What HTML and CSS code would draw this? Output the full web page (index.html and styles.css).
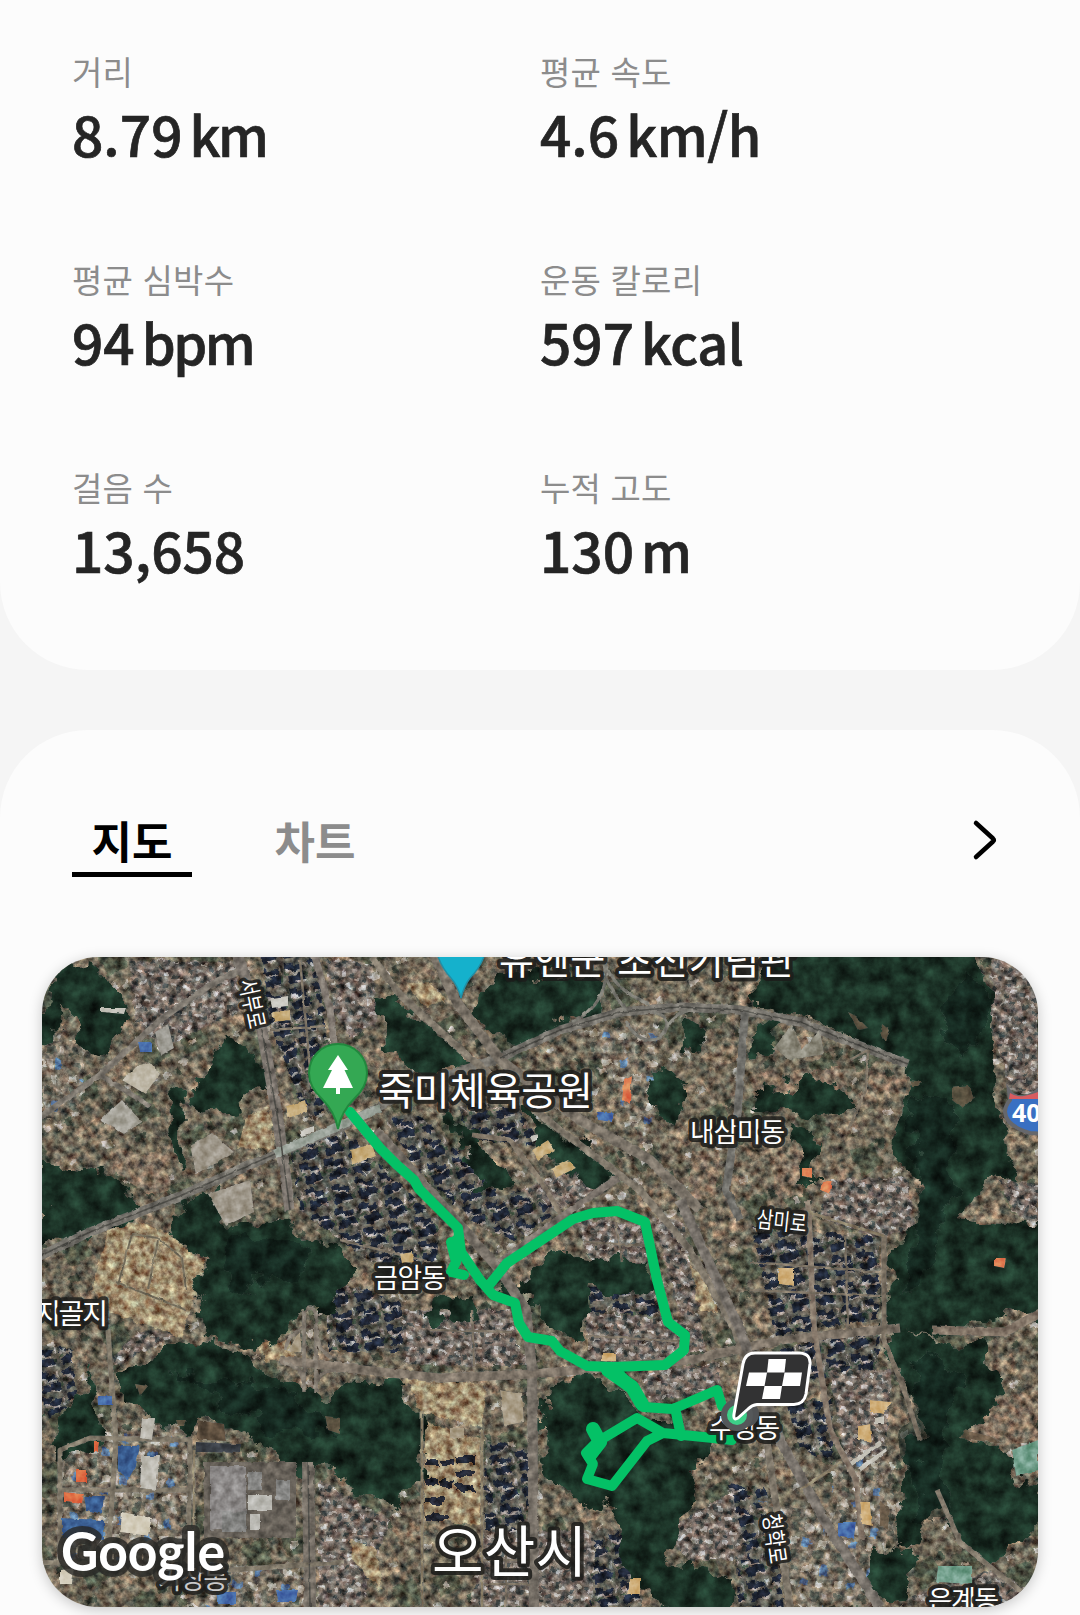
FILE: index.html
```html
<!DOCTYPE html>
<html lang="ko">

<head>
  <meta charset="UTF-8" />
  <meta name="viewport" content="width=device-width, initial-scale=1.0" />
  <title>운동 기록</title>
  <link rel="stylesheet" href="styles.css">
</head>

<body>
  <section class="card summary">
    <div class="stat">
      <div class="label">거리</div>
      <div class="value">8.79<span class="unit">km</span></div>
    </div>
    <div class="stat">
      <div class="label">평균 속도</div>
      <div class="value">4.6<span class="unit wide">km/h</span></div>
    </div>
    <div class="stat">
      <div class="label">평균 심박수</div>
      <div class="value">94<span class="unit">bpm</span></div>
    </div>
    <div class="stat">
      <div class="label">운동 칼로리</div>
      <div class="value">597<span class="unit wide">kcal</span></div>
    </div>
    <div class="stat">
      <div class="label">걸음 수</div>
      <div class="value">13,658</div>
    </div>
    <div class="stat">
      <div class="label">누적 고도</div>
      <div class="value">130<span class="unit">m</span></div>
    </div>
  </section>

  <section class="card detail">
    <div class="tabs">
      <div class="tab active">지도</div>
      <div class="tab">차트</div>
      <svg class="more" width="28" height="44" viewBox="0 0 28 44">
        <path d="M5 5 L22 20.5 Q23.5 22 22 23.5 L5 39" />
      </svg>
    </div>

    <div class="map">
      <svg width="996" height="650" viewBox="42 957 996 650">
        <defs>
          <!-- built-up ground: slightly warped, small patches of light and dark -->
          <filter id="urban" x="0" y="0" width="100%" height="100%" color-interpolation-filters="sRGB">
            <feTurbulence type="fractalNoise" baseFrequency="0.11" numOctaves="3" seed="7" result="w" />
            <feDisplacementMap in="SourceGraphic" in2="w" scale="8" xChannelSelector="R" yChannelSelector="G" result="d" />
            <feTurbulence type="fractalNoise" baseFrequency="0.13" numOctaves="4" seed="21" />
            <feColorMatrix type="matrix" values="1.05 .15 0 0 -.08  1.05 0 .1 0 -.06  1.05 0 .2 0 -.1  0 0 0 0 1" result="g" />
            <feBlend in="g" in2="d" mode="overlay" />
          </filter>
          <!-- tree cover: ragged edges, soft grain -->
          <filter id="trees" x="-5%" y="-5%" width="110%" height="110%" color-interpolation-filters="sRGB">
            <feTurbulence type="fractalNoise" baseFrequency="0.035" numOctaves="5" seed="3" result="n" />
            <feDisplacementMap in="SourceGraphic" in2="n" scale="38" xChannelSelector="R" yChannelSelector="G" result="d" />
            <feTurbulence type="fractalNoise" baseFrequency="0.06" numOctaves="5" seed="12" />
            <feColorMatrix type="matrix" values=".8 0 0 0 .04  .8 0 0 0 .04  .8 0 0 0 .04  0 0 0 0 1" result="g" />
            <feBlend in="g" in2="d" mode="overlay" />
            <feComposite in2="d" operator="in" />
          </filter>
          <filter id="rough" x="-5%" y="-5%" width="110%" height="110%" color-interpolation-filters="sRGB">
            <feTurbulence type="fractalNoise" baseFrequency="0.12" numOctaves="3" seed="9" result="n" />
            <feDisplacementMap in="SourceGraphic" in2="n" scale="3" xChannelSelector="R" yChannelSelector="G" result="d" />
            <feColorMatrix in="n" type="matrix" values=".45 0 0 0 .27  .45 0 0 0 .27  .45 0 0 0 .27  0 0 0 0 1" result="g" />
            <feBlend in="g" in2="d" mode="overlay" />
            <feComposite in2="d" operator="in" />
          </filter>

          <pattern id="apt" width="25" height="25" patternUnits="userSpaceOnUse" patternTransform="rotate(-12)">
            <rect width="25" height="25" fill="#5a594f" />
            <path d="M1 2h9v4h9v6h-10v-3h-8z M3 15h8v-2h10v8h-9v2h-9z" fill="#1d2431" />
            <path d="M2 8h7v3h9v2h-11v-2h-5z M12 21h9v2h-9z M21 3h2v8h-2z" fill="#8f8981" />
            <path d="M21 14h3v5h-3z M1 12h4v2h-4z" fill="#364436" />
          </pattern>
          <pattern id="houses" width="29" height="25" patternUnits="userSpaceOnUse" patternTransform="rotate(8)">
            <rect width="29" height="25" fill="#6a6259" />
            <path d="M1 1h5v4h-5z M15 1h6v3h-6z M9 14h5v4h-5z M22 18h5v3h-5z" fill="#aba69f" />
            <path d="M8 2h5v4h-5z M23 2h4v5h-4z M2 9h5v3h-5z M17 15h4v5h-4z M2 20h5v3h-5z" fill="#3b403e" />
            <path d="M10 8h6v3h-6z M20 10h6v4h-6z M2 15h5v3h-5z M10 20h4v3h-4z" fill="#857d74" />
          </pattern>
          <pattern id="works" width="47" height="41" patternUnits="userSpaceOnUse" patternTransform="rotate(4)">
            <rect width="47" height="41" fill="#716a5b" />
            <path d="M2 2h9v7h-9z M31 4h8v6h-8z M16 29h10v7h-10z" fill="#aaa597" />
            <path d="M15 3h8v6h-8z M35 28h7v9h-7z" fill="#526f92" />
            <path d="M3 14h7v9h-7z M26 14h9v8h-9z M5 30h7v5h-7z" fill="#4d5147" />
            <path d="M15 14h7v8h-7z M38 15h6v8h-6z M28 28h5v9h-5z" fill="#918a7c" />
          </pattern>
          <pattern id="soil" width="120" height="100" patternUnits="userSpaceOnUse" patternTransform="rotate(-25)">
            <rect width="120" height="100" fill="#676151" />
            <path d="M5 8h30v20h-30z M70 54h34v18h-34z M40 76h22v16h-22z" fill="#7d705c" />
            <path d="M44 4h24v26h-24z M8 48h26v30h-26z M84 12h24v22h-24z" fill="#4c5141" />
            <path d="M42 40h8v6h-8z M54 42h7v7h-7z M74 38h8v5h-8z M90 80h9v6h-9z M14 36h7v5h-7z M52 82h6v5h-6z M90 22h7v5h-7z" fill="#a19b8e" />
            <path d="M72 4h6v9h-6z M2 86h10v7h-10z M108 44h7v7h-7z M66 42h5v8h-5z M20 60h8v8h-8z" fill="#3c4337" />
          </pattern>
        </defs>

        <g filter="url(#urban)">
          <rect x="30" y="945" width="1020" height="674" fill="url(#soil)" />

          <!-- housing blocks -->
          <g fill="url(#apt)">
            <path d="M262 950 L318 950 L326 1036 L350 1100 L306 1118 L286 1062 L268 1020Z" />
            <path d="M290 1145 L342 1130 L440 1222 L436 1270 L372 1262 L352 1250 L300 1210Z" />
            <path d="M385 1120 L414 1112 L480 1170 L500 1196 L535 1185 L562 1210 L512 1240 L478 1226 L420 1172Z" />
            <path d="M455 1100 L520 1110 L540 1146 L470 1140Z" />
            <path d="M322 1278 L400 1300 L404 1352 L330 1352Z" />
            <path d="M752 1226 L880 1238 L878 1318 L776 1336Z" />
            <path d="M780 1348 L880 1330 L878 1380 L800 1378Z" />
            <path d="M785 1400 L832 1400 L832 1462 L800 1448Z" />
            <path d="M485 1440 L530 1450 L530 1530 L486 1530Z" />
            <path d="M42 1345 L72 1350 L76 1400 L42 1424Z" />
            <path d="M588 1285 L662 1290 L660 1316 L590 1312Z" />
            <path d="M728 1484 L768 1490 L784 1607 L740 1607Z" />
            <path d="M596 1530 L640 1530 L640 1607 L580 1607Z" />
          </g>
          <g fill="url(#houses)">
            <path d="M325 957 L372 965 L378 1020 L350 1040 L334 1010Z" />
            <path d="M130 960 L235 962 L240 1010 L160 1050 L135 1020Z" />
            <path d="M574 1216 L640 1224 L655 1262 L594 1268Z" />
            <path d="M652 1216 L682 1222 L706 1352 L690 1352Z" />
            <path d="M586 1312 L690 1320 L690 1362 L588 1362Z" />
            <path d="M402 1310 L512 1310 L520 1366 L404 1364Z" />
            <path d="M640 1372 L720 1362 L720 1390 L650 1402Z" />
            <path d="M660 1532 L732 1492 L748 1560 L690 1560Z" />
            <path d="M828 1180 L908 1176 L914 1230 L872 1238 L820 1216Z" />
            <path d="M830 1372 L892 1368 L884 1470 L845 1460Z" />
            <path d="M992 960 L1038 960 L1038 1100 L1010 1090 L990 1020Z" />
            <path d="M488 1340 L540 1360 L530 1366 L490 1366Z" />
            <path d="M520 1190 L590 1160 L610 1184 L560 1210Z" />
            <path d="M484 1530 L596 1530 L590 1607 L470 1607Z" />
            <path d="M110 1360 L140 1330 L180 1334 L140 1352 L118 1366Z" />
            <path d="M320 1480 L390 1520 L360 1607 L318 1607Z" />
            <path d="M1000 1180 L1038 1184 L1038 1226 L1012 1212Z" />
            <path d="M900 1600 L990 1570 L1030 1590 L1000 1607Z" />
          </g>
          <g fill="url(#works)">
            <path d="M60 1440 L190 1420 L192 1560 L58 1560Z" />
            <path d="M42 1020 L85 1050 L80 1110 L42 1120Z" />
            <path d="M578 1030 L660 1024 L650 1160 L690 1190 L660 1180 L600 1060Z" />
            <path d="M180 1560 L300 1570 L310 1607 L190 1607Z" />
            <path d="M760 1500 L890 1520 L880 1607 L800 1607Z" />
            <path d="M830 1470 L892 1450 L896 1540 L838 1530Z" />
          </g>

          <!-- bare soil and fields -->
          <g fill="#9a8868">
            <path d="M108 1228 L140 1222 L168 1234 L205 1262 L182 1338 L110 1312 L92 1290Z" />
            <path d="M406 1378 L486 1384 L482 1428 L420 1412Z" />
            <path d="M424 1422 L482 1440 L480 1525 L424 1520Z" />
            <path d="M245 1120 L268 1106 L276 1150 L238 1148Z" />
            <path d="M405 984 L430 982 L446 1000 L426 1008Z" />
            <path d="M690 1264 L708 1280 L718 1312 L700 1312Z" />
            <path d="M258 1344 L290 1340 L296 1360 L266 1362Z" />
            <path d="M350 1540 L376 1548 L382 1590 L352 1560Z" />
          </g>
          <g fill="#786a58">
            <path d="M750 1072 L806 1074 L840 1066 L850 1098 L812 1088 L754 1098Z" />
            <path d="M870 1070 L908 1080 L906 1096 L868 1086Z" />
            <path d="M770 1156 L804 1150 L802 1196 L776 1198Z" />
            <path d="M692 1150 L720 1150 L716 1198 L688 1200Z" />
            <path d="M110 1148 L165 1160 L172 1190 L150 1196 L112 1170Z" />
            <path d="M985 1400 L1038 1390 L1038 1440 L1000 1446 L960 1438Z" />
          </g>
          <!-- half-built towers south of the main road -->
          <path d="M425 1458h14v8h-14z M442 1460h12v6h-12z M456 1456h20v7h-20z M425 1478h14v8h-14z M440 1480h14v6h-14z M456 1471h18v6h-18z M456 1484h18v7h-18z M425 1497h20v7h-20z M425 1514h22v7h-22z" fill="#20242e" />
        </g>

        <!-- woods -->
        <g fill="#1f382b" filter="url(#trees)">
          <path d="M42 1010 L62 970 L90 962 L116 985 L136 1015 L108 1050 L85 1045 L60 1000 L58 1040 L42 1045Z" />
          <path d="M205 1075 L222 1040 L252 1052 L262 1082 L235 1115 L200 1110 L190 1095Z" />
          <path d="M42 1160 L90 1170 L140 1190 L138 1222 L90 1232 L42 1246Z" />
          <path d="M165 1208 L200 1200 L225 1230 L290 1224 L345 1248 L345 1285 L330 1310 L310 1310 L290 1322 L260 1348 L205 1340 L192 1290 L208 1258 L175 1240Z" />
          <path d="M120 1372 L160 1345 L200 1345 L240 1352 L262 1370 L298 1380 L324 1402 L350 1382 L390 1384 L426 1420 L424 1480 L396 1512 L330 1472 L290 1470 L250 1440 L200 1415 L180 1428 L120 1412Z" />
          <path d="M42 1450 L74 1412 L92 1362 L104 1440 L60 1460Z" />
          <path d="M380 995 L400 1000 L476 1062 L430 1074 L384 1050Z" />
          <path d="M466 1008 L500 972 L580 972 L602 990 L598 1015 L560 1030 L510 1055Z" />
          <path d="M755 940 L985 940 L990 1000 L985 1060 L1000 1110 L1012 1175 L985 1185 L964 1216 L1060 1226 L1060 1310 L960 1322 L930 1335 L885 1325 L888 1240 L920 1220 L922 1186 L892 1150 L905 1100 L910 1066 L870 1046 L820 1022 L757 1008Z" />
          <path d="M886 1320 L946 1345 L985 1342 L1004 1392 L965 1432 L1010 1452 L1022 1482 L1060 1500 L1030 1532 L990 1562 L960 1545 L940 1500 L926 1546 L900 1550 L895 1480 L918 1440 L914 1400 L890 1360Z" />
          <path d="M505 1292 L558 1250 L610 1262 L645 1264 L660 1292 L590 1290 L586 1340 L560 1335 L530 1305Z" />
          <path d="M542 1396 L570 1378 L612 1382 L640 1410 L704 1440 L692 1500 L660 1520 L600 1506 L560 1490 L540 1450Z" />
          <path d="M604 1512 L690 1500 L664 1560 L730 1580 L724 1625 L650 1597 L620 1560Z" />
          <path d="M752 1086 L842 1082 L852 1112 L800 1116 L750 1105Z" />
          <path d="M425 1100 L470 1130 L500 1160 L508 1195 L478 1192 L470 1152Z" />
          <path d="M866 1545 L912 1556 L906 1598 L872 1600Z" />
          <path d="M516 1105 L600 1160 L620 1180 L590 1190 L540 1150Z" />
          <path d="M796 1130 L820 1136 L818 1176 L800 1176Z" />
          <path d="M754 1020 L776 1018 L772 1052 L752 1056Z" />
          <path d="M424 1312 L470 1290 L478 1310 L440 1326Z" />
          <path d="M650 1070 L686 1080 L680 1116 L652 1106Z" />
          <path d="M684 1010 L704 1018 L700 1058 L680 1052Z" />
          <path d="M170 1090 L186 1100 L182 1170 L172 1150Z" />
          <path d="M182 1196 L216 1188 L224 1226 L200 1240Z" />
        </g>
        <g fill="#12231e" opacity=".5" filter="url(#trees)">
          <path d="M910 1090 L960 1110 L950 1190 L925 1280 L900 1300 L920 1200Z" />
          <path d="M920 1350 L960 1380 L940 1440 L950 1520 L920 1520 L905 1440Z" />
          <path d="M170 1370 L290 1390 L340 1430 L270 1430Z" />
          <path d="M960 970 L990 1000 L960 1060 L940 1020Z" />
          <path d="M220 1240 L300 1240 L310 1270 L230 1290Z" />
        </g>
        <!-- clearings -->
        <g fill="#6d5c49" opacity=".8" filter="url(#rough)">
          <path d="M952 1088 L968 1086 L974 1098 L962 1108 L952 1100Z M848 1012 L856 1016 L868 1028 L858 1030Z M882 1024 L890 1030 L886 1042 L880 1036Z M910 1080 L922 1082 L918 1086 L912 1086Z M960 1438 L1004 1444 L990 1436 L964 1430Z M325 1416 L340 1418 L340 1434 L328 1430Z M176 1420 L186 1420 L184 1426 L178 1426Z M136 1384 L148 1386 L140 1396Z M880 1500 L890 1510 L888 1530 L880 1526Z" />
        </g>

        <!-- roads -->
        <g class="roads" filter="url(#rough)">
          <path d="M36 1258 L90 1232 L180 1196 L275 1154 L340 1128 L420 1084 L500 1058 L560 1030 L620 1012 L680 1007 L740 1010 L800 1022 L850 1042 L908 1064" stroke="#77746d" stroke-width="9" />
          <path d="M36 1120 L100 1075 L160 1020 L210 985 L240 970" stroke="#7f7970" stroke-width="6" />
          <path d="M100 1075 L150 1106" stroke="#7f7970" stroke-width="5" />
          <path d="M236 950 L262 1030 L278 1120 L290 1210" stroke="#7b746d" stroke-width="11" />
          <path d="M313 950 L330 1010 L336 1060" stroke="#857d75" stroke-width="7" />
          <path d="M372 957 L400 995 L470 1058 L560 1130 L640 1190 L690 1250 L735 1330 L764 1420 L790 1607" stroke="#80786b" stroke-width="7" />
          <path d="M432 950 L455 1000 L500 1060 L580 1120 L650 1160 L700 1210" stroke="#7c7469" stroke-width="10" />
          <path d="M376 1130 L420 1180 L500 1270 L526 1310 L532 1370 L534 1607" stroke="#787168" stroke-width="10" />
          <path d="M472 1135 L510 1140 L540 1180 L562 1216 L614 1180" stroke="#84796a" stroke-width="5" />
          <path d="M500 1262 L560 1218 L600 1190 L618 1178" stroke="#7b736b" stroke-width="7" />
          <path d="M280 1360 L380 1372 L440 1378 L534 1374 L690 1360 L780 1340 L900 1328" stroke="#7e7468" stroke-width="9" />
          <path d="M932 1330 L1005 1332 L1042 1312" stroke="#86786a" stroke-width="9" />
          <path d="M304 1310 L304 1392 M316 1312 L316 1392 M304 1312 Q310 1304 316 1312 M286 1350 Q286 1336 303 1328 M317 1330 Q318 1352 332 1358 M284 1362 Q304 1368 304 1386 M316 1382 Q320 1370 336 1370" stroke="#837b70" stroke-width="3.5" />
          <path d="M308 1462 L310 1607" stroke="#777067" stroke-width="12" />
          <path d="M745 1010 L738 1110 L726 1190 L740 1220" stroke="#6f6e69" stroke-width="8" />
          <path d="M808 1200 L814 1330 L830 1430 L856 1480 L862 1540" stroke="#897b6d" stroke-width="6" />
          <path d="M884 1236 L884 1340 L902 1384 L920 1440" stroke="#7a7062" stroke-width="5" />
          <path d="M680 1200 L740 1330 L780 1440 L830 1530 L880 1607" stroke="#77716a" stroke-width="10" />
          <path d="M108 1330 L116 1440 L108 1560 M60 1560 L60 1450 L90 1438 L190 1440 L188 1560 M60 1490 L190 1490 M36 1562 L230 1570 L345 1562" stroke="#81796a" stroke-width="5" />
          <path d="M937 1490 L960 1542 L1000 1575 L1042 1607" stroke="#82796b" stroke-width="5" />
          <path d="M602 955 Q610 980 598 1000 Q590 1014 572 1022 M604 975 Q616 998 626 1010 M626 1022 Q640 1046 660 1038 Q676 1018 654 1012 M664 1034 Q670 1016 690 1010 M604 960 Q612 990 650 1004" stroke="#7c7b73" stroke-width="3" />
          <path d="M194 1450 L194 1530 M482 1430 L482 1607 M422 1410 L422 1607 M808 1212 L884 1236 M800 1490 L842 1462" stroke="#8b8069" stroke-width="3" />
          <path d="M275 1154 L380 1108" stroke="#9ba39a" stroke-width="9" />
          <path d="M118 1285 L132 1234 L158 1238 L182 1258 L186 1290 M148 1290 L158 1240 M116 1282 L186 1310" stroke="#706957" stroke-width="2" />
          <path d="M340 1240 L430 1262 M750 1262 L880 1272 M750 1290 L880 1296 M845 1236 L848 1330 M472 1310 L474 1366 M430 1330 L512 1332 M616 1222 L622 1262 M584 1242 L648 1246 M586 1336 L692 1342 M850 1060 L868 1050 L866 1090 L848 1130 M484 1560 L530 1560 M484 1584 L530 1584 M506 1530 L506 1607 M270 1030 L326 1026 M300 960 L312 1090" stroke="#7e7465" stroke-width="2.5" />
          <!-- lane dividers -->
          <path d="M36 1258 L90 1232 L180 1196 L275 1154 M500 1058 L560 1030 L620 1012 L680 1007 L740 1010 L800 1022 L850 1042 L908 1064 M262 1030 L278 1120 L290 1210 M308 1462 L310 1607" stroke="#4f4e49" stroke-width="1.5" />
        </g>

        <!-- large roofs -->
        <g filter="url(#rough)">
          <path d="M204 1462 L296 1462 L296 1538 L204 1538Z" fill="#68625a" />
          <path d="M210 1466 L246 1466 L246 1525 L210 1530Z" fill="#8d8a89" />
          <path d="M248 1472 L262 1472 L262 1490 L248 1490Z M276 1480 L290 1480 L290 1500 L276 1500Z M222 1512 L246 1512 L246 1532 L222 1532Z" fill="#858583" />
          <path d="M248 1495 L272 1495 L272 1510 L248 1510Z M250 1514 L260 1514 L260 1530 L250 1530Z" fill="#b9b8b2" />
          <path d="M196 1442 L240 1444 L240 1453 L196 1452Z" fill="#3b4047" />
          <path d="M198 1420 L224 1424 L226 1441 L198 1440Z" fill="#5e4f3f" />
          <path d="M122 1512 L152 1518 L148 1536 L120 1532Z M60 1570 L74 1568 L72 1584 L60 1584Z" fill="#d3ccba" />
          <path d="M141 1456 L160 1456 L156 1490 L140 1488Z M142 1418 L155 1418 L152 1440 L140 1438Z" fill="#bdbab1" />
          <path d="M118 1446 L140 1446 L136 1466 L128 1480 L118 1470Z M62 1518 L104 1520 L104 1540 L62 1538Z M84 1496 L104 1496 L102 1514 L86 1510Z" fill="#3b5f93" />
          <path d="M64 1492 L84 1494 L82 1504 L64 1502Z M76 1470 L86 1470 L86 1482 L76 1482Z M94 1442 L99 1442 L98 1452 L94 1452Z" fill="#dc6740" />
          <path d="M122 1080 L136 1066 L150 1062 L160 1074 L145 1094Z" fill="#bcb5a4" />
          <path d="M100 1120 L122 1100 L142 1122 L124 1134Z" fill="#a5a298" />
          <path d="M155 1032 L168 1024 L174 1048 L160 1056Z" fill="#a09e96" />
          <path d="M190 1145 L212 1133 L234 1152 L196 1174Z M208 1194 L250 1180 L254 1212 L226 1226Z" fill="#a0998c" />
          <path d="M286 1106 L305 1100 L308 1112 L288 1118Z M350 1150 L372 1144 L376 1156 L352 1166Z M532 1150 L548 1140 L555 1150 L538 1160Z M552 1168 L568 1160 L576 1168 L556 1178Z M272 1012 L290 1010 L290 1020 L274 1022Z M400 1254 L412 1252 L414 1262 L402 1264Z" fill="#c7ad7c" />
          <path d="M270 998 L288 996 L288 1006 L272 1008Z M530 1136 L538 1134 L538 1140 L532 1142Z M300 1130 L314 1126 L314 1132 L302 1136Z M100 1008 L126 1008 L124 1014 L100 1012Z" fill="#c9c7bf" />
          <path d="M774 1048 L792 1024 L802 1050 L820 1030 L824 1054 L790 1060Z" fill="#8c897b" />
          <path d="M602 1353 L616 1353 L616 1361 L602 1361Z M870 1400 L892 1402 L884 1414 L870 1412Z M858 1426 L870 1424 L872 1442 L858 1440Z M860 1502 L870 1502 L872 1526 L862 1524Z M630 1578 L640 1578 L640 1594 L628 1594Z M778 1268 L794 1268 L794 1286 L778 1284Z" fill="#cfae79" />
          <path d="M500 1390 L522 1394 L524 1422 L504 1426Z M450 1428 L464 1428 L464 1438 L450 1438Z M296 1336 L300 1332 L302 1352 L288 1352Z" fill="#a99d87" />
          <path d="M1012 1450 L1038 1440 L1038 1470 L1016 1476Z M938 1566 L972 1566 L972 1584 L936 1582Z" fill="#75a18e" />
          <path d="M624 1080 L632 1076 L630 1104 L622 1100Z M802 1168 L812 1168 L812 1178 L802 1176Z M822 1182 L832 1180 L830 1194 L820 1190Z M994 1258 L1006 1258 L1004 1268 L994 1266Z" fill="#df8054" />
          <path d="M596 1112 L614 1112 L612 1122 L598 1120Z M138 1042 L152 1042 L152 1052 L140 1052Z M97 1396 L112 1396 L112 1405 L98 1405Z M838 1522 L856 1522 L854 1538 L838 1536Z M216 1592 L236 1592 L236 1604 L218 1604Z M276 1590 L298 1590 L296 1602 L278 1602Z" fill="#4a70ad" />
          <path d="M858 1468 L886 1448 L888 1452 L860 1472Z M850 1462 L880 1440 L882 1444 L852 1466Z M874 1418 L884 1416 L884 1424 L874 1424Z" fill="#c6c3b9" />
        </g>

        <!-- walked route -->
        <g class="route">
          <path d="M350 1112 L380 1148 L397 1165 L414 1180 L419 1189 L458 1228 L461 1252 L480 1280" stroke-width="12" />
          <path d="M480 1280 L493 1295 L515 1303 L519 1323 L528 1337 L552 1341 L560 1351 L587 1366 L613 1367 L665 1365 L684 1350 L685 1335 L668 1322 L657 1280 L645 1222 L617 1211 L593 1213 L573 1219 L507 1263 L490 1284" />
          <path d="M451 1242 L456 1262 L451 1272 L464 1275 M456 1240 L456 1262" />
          <path d="M616 1370 L633 1389 L643 1407 L673 1409 L717 1390 L722 1406 M675 1408 L681 1436" />
          <path d="M608 1370 L632 1387 L642 1404" class="thick" />
          <path d="M732 1440 L713 1438 L663 1433 L637 1418 L597 1442 L586 1453 L593 1464 L587 1479 L612 1486 L647 1441 L663 1433" />
          <path d="M593 1429 L600 1442 L590 1455" class="thick" />
        </g>

        <!-- place names -->
        <g class="names">
          <text x="499" y="974" font-size="38" textLength="296">유엔군 초전기념관</text>
          <text x="378" y="1105" font-size="39" textLength="215">죽미체육공원</text>
          <text x="690" y="1142" font-size="27" textLength="95">내삼미동</text>
          <text x="374" y="1288" font-size="27" textLength="72">금암동</text>
          <text x="35" y="1324" font-size="28" textLength="73">지골지</text>
          <text x="709" y="1438" font-size="27" textLength="71">수청동</text>
          <text x="432" y="1572" font-size="56" textLength="155">오산시</text>
          <text x="928" y="1610" font-size="27" textLength="71">은계동</text>
          <text x="158" y="1589" font-size="27" textLength="70" class="dim">가장동</text>
          <text font-size="23" textLength="50" lengthAdjust="spacingAndGlyphs" transform="translate(756 1227) rotate(6)">삼미로</text>
          <text font-size="23" textLength="50" lengthAdjust="spacingAndGlyphs" transform="translate(239 981) rotate(78)">서부로</text>
          <text font-size="23" textLength="50" lengthAdjust="spacingAndGlyphs" transform="translate(763 1515) rotate(82)">청학로</text>
        </g>

        <!-- road shield -->
        <path d="M1009 1091 Q1014 1098 1024 1097 Q1032 1096 1038 1090 L1046 1090 L1046 1134 L1030 1133 Q1006 1126 1005 1112 Q1005 1106 1010 1100Z" fill="#3970c2" stroke="#66676b" stroke-width="4" />
        <path d="M1010 1093 Q1016 1097 1024 1096 Q1034 1094 1040 1091 L1040 1099 L1009 1099Z" fill="#d75c60" />
        <text class="shield" x="1012" y="1122">40</text>

        <!-- place pins -->
        <path d="M436 950 L486 950 Q482 966 470 978 Q464 986 461 998 Q458 986 451 978 Q440 966 436 950Z" fill="#15b1cc" stroke="#238ea5" stroke-width="1.5" />
        <path d="M338 1129 Q335 1112 322 1099 Q309 1087 309 1073 A29 29 0 0 1 367 1073 Q367 1087 354 1099 Q341 1112 338 1129Z" fill="#34a853" stroke="#22883e" stroke-width="2" />
        <path d="M338 1055 L348 1070 L344.500 1070 L353 1088 L340 1088 L340 1094 L336 1094 L336 1088 L323 1088 L332 1070 L328 1070Z" fill="#fff" />

        <!-- finish flag -->
        <circle cx="746" cy="1414" r="13" fill="#505254" />
        <circle cx="737" cy="1415" r="13" fill="#3dcf88" stroke="#55585a" stroke-width="6" />
        <path d="M755 1353 L800 1353 Q811 1354 810 1364 L806 1394 Q804 1404 794 1404.500 L757 1404.500 Q752 1405 748 1409 L738 1418 Q733 1421 734 1414 L743 1364 Q745 1353 755 1353Z" fill="#323233" stroke="#fff" stroke-width="3" stroke-linejoin="round" />
        <g fill="#fff">
          <path d="M768.500 1359 L786 1359 L784.500 1372.500 L767 1372.500Z" />
          <path d="M749 1372.500 L767 1372.500 L764.500 1386 L746 1386Z" />
          <path d="M784.500 1372.500 L802 1372.500 L800 1386 L782 1386Z" />
          <path d="M764.500 1386 L782 1386 L780 1399 L762 1399Z" />
        </g>

        <text class="logo" x="61" y="1571" textLength="164" lengthAdjust="spacingAndGlyphs">Google</text>
      </svg>
    </div>
  </section>
</body>

</html>
```

FILE: styles.css
```css
body {
  margin: 0;
  width: 1080px;
  height: 1615px;
  overflow: hidden;
  background-color: #f5f5f5;
  font-family: "Noto Sans CJK KR", sans-serif;
  display: flex;
  flex-direction: column;
  gap: 60px;
}

.card {
  background-color: #fcfcfc;
  box-sizing: border-box;
  flex-shrink: 0;
}

.summary {
  height: 670px;
  padding: 47px 72px 0;
  border-radius: 0 0 88px 88px;
  display: grid;
  grid-template-columns: 468px 468px;
  grid-auto-rows: 208px;
}

.label {
  font-size: 33px;
  line-height: 48px;
  color: #8c8c8c;
  letter-spacing: 0.2px;
}

.value {
  margin-top: 3px;
  font-size: 55px;
  line-height: 70px;
  font-weight: 500;
  color: #252525;
  -webkit-text-stroke: 0.7px #252525;
}

.unit {
  margin-left: 7px;
  font-size: 54px;
  letter-spacing: -2.5px;
}

.unit.wide {
  letter-spacing: -0.5px;
}

.detail {
  height: 960px;
  padding-top: 79px;
  border-radius: 88px 88px 0 0;
}

.tabs {
  height: 68px;
  padding: 0 81px 0 72px;
  display: flex;
  align-items: flex-start;
  gap: 63px;
}

.tab {
  width: 120px;
  height: 63px;
  font-size: 44px;
  line-height: 62px;
  font-weight: 700;
  text-align: center;
  color: #8c8c8c;
}

.tab.active {
  color: #000;
  border-bottom: 5px solid #000;
}

.more {
  margin: 9px 0 0 auto;
  fill: none;
  stroke: #000;
  stroke-width: 4.5;
  stroke-linecap: round;
}

.map {
  width: 996px;
  height: 650px;
  margin: 80px 42px 0;
  border-radius: 56px;
  overflow: hidden;
  box-shadow: 0 3px 14px rgba(0, 0, 0, 0.22);
}

.map svg {
  display: block;
}

.roads path {
  fill: none;
  stroke-linejoin: round;
}

.route path {
  fill: none;
  stroke: #04c166;
  stroke-width: 10;
  stroke-linejoin: round;
  stroke-linecap: round;
}

.route .thick {
  stroke-width: 14;
}

.names text {
  fill: #fff;
  stroke: rgba(28, 28, 26, 0.85);
  stroke-width: 8px;
  stroke-linejoin: round;
  paint-order: stroke;
}

.names .dim {
  fill: #c9c9c9;
}

.shield {
  font-family: "Open Sans", sans-serif;
  font-size: 25px;
  font-weight: 700;
  fill: #fff;
}

.logo {
  font-family: Lato, sans-serif;
  font-size: 54px;
  font-weight: 700;
  fill: #fff;
  stroke: rgba(40, 40, 38, 0.8);
  stroke-width: 12px;
  stroke-linejoin: round;
  paint-order: stroke;
}
```
